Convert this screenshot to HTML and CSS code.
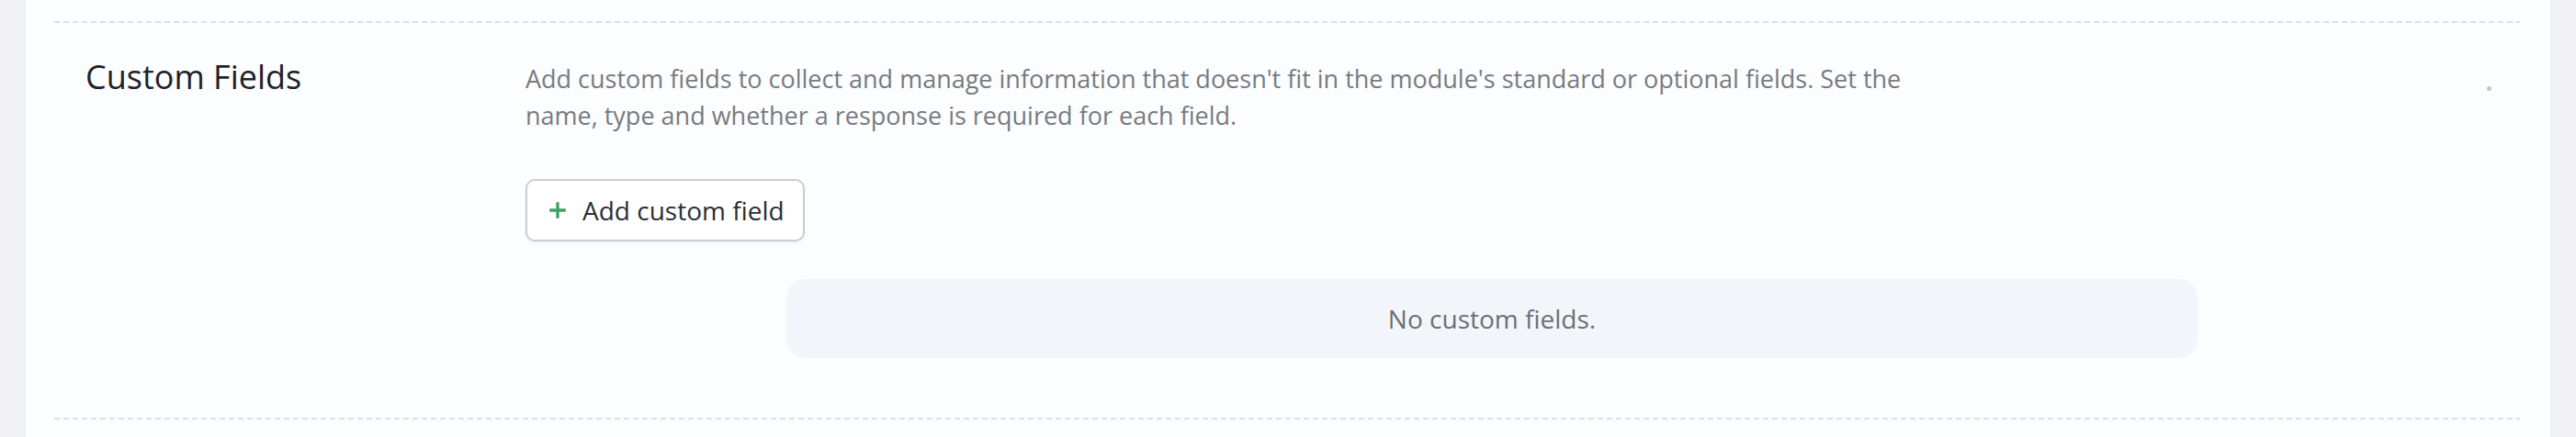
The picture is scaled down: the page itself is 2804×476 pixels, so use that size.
FILE: index.html
```html
<!DOCTYPE html>
<html lang="en">
<head>
  <meta charset="UTF-8" />
  <meta name="viewport" content="width=device-width, initial-scale=1.0"/>
  <title>Module settings - Custom Fields</title>
  <link rel="stylesheet" href="styles.css">
</head>
<body>
  <div class="panel">
    <div class="divider"></div>
    <section class="settings-row">
      <h2 class="row-title">Custom Fields</h2>
      <div class="row-body">
        <p class="row-desc">Add custom fields to collect and manage information that doesn't fit in the module's standard or optional fields. Set the name, type and whether a response is required for each field.</p>
        <button type="button" class="btn-add">
          <svg class="plus" viewBox="0 0 20 20" width="20" height="20" aria-hidden="true">
            <path d="M10 2v16M2 10h16" />
          </svg>
          <span>Add custom field</span>
        </button>
        <div class="empty">No custom fields.</div>
      </div>
      <div class="row-actions"><span class="dot"></span></div>
    </section>
    <div class="divider"></div>
  </div>
</body>
</html>
```

FILE: styles.css
```css
html, body {
  margin: 0;
  height: 100%;
}
body {
  font-family: "Open Sans", "Noto Sans", Arial, sans-serif;
  background: #f2f2f4;
  color: #22262c;
}
.panel {
  margin: 0 28px;
  min-height: 100%;
  box-sizing: border-box;
  padding: 23px 33px 0 31px;
  background: #fcfdfe;
  box-shadow: 0 0 2px rgba(0, 0, 0, 0.06);
}
.divider {
  height: 2px;
  background: repeating-linear-gradient(to right, #dedfe3 0 6px, transparent 6px 10px);
}
.settings-row {
  display: grid;
  grid-template-columns: 479px 2104px 1fr;
  padding: 41px 0 65px 34px;
}
.row-title {
  margin: 0;
  font-size: 36px;
  line-height: 36px;
  font-weight: 400;
  color: #1f2329;
}
.row-body {
  display: flex;
  flex-direction: column;
  align-items: flex-start;
}
.row-desc {
  margin: 0;
  max-width: 1530px;
  font-size: 27px;
  line-height: 40px;
  color: #777b81;
}
.btn-add {
  margin-top: 49px;
  display: flex;
  align-items: center;
  gap: 16px;
  height: 68px;
  padding: 0 20px 0 22px;
  border: 2px solid #cbcdd2;
  border-radius: 10px;
  background: #fff;
  box-shadow: 0 2px 3px rgba(0, 0, 0, 0.05);
  font-family: inherit;
  font-size: 28px;
  color: #2b2f35;
}
.plus {
  width: 22px;
  height: 22px;
  fill: none;
  stroke: #3f9e63;
  stroke-width: 3;
}
.empty {
  margin-top: 41px;
  align-self: center;
  width: 1536px;
  box-sizing: border-box;
  padding: 23px 0;
  border-radius: 20px;
  background: #f2f6fa;
  text-align: center;
  font-size: 28px;
  line-height: 40px;
  color: #6b7076;
}
.row-actions {
  display: flex;
  justify-content: center;
}
.dot {
  margin-top: 28px;
  width: 5px;
  height: 5px;
  border-radius: 50%;
  background: #c4c5c9;
}
```
